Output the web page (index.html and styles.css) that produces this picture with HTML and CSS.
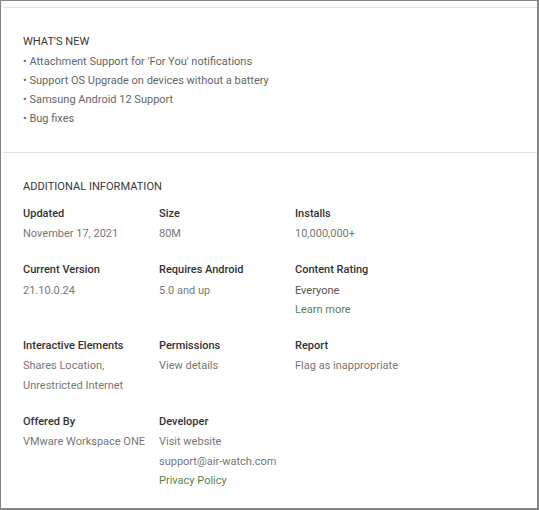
FILE: index.html
```html
<!DOCTYPE html>
<html lang="en">
  <head>
    <title>App details</title>
    <meta charset="UTF-8" />
    <meta name="viewport" content="width=device-width, initial-scale=1.0" />
    <link rel="stylesheet" href="styles.css">
  </head>
  <body>
    <div class="frame">
      <div class="section">
        <h2 class="section-title">What's New</h2>
        <div class="notes">
          <div>• Attachment Support for 'For You' notifications</div>
          <div>• Support OS Upgrade on devices without a battery</div>
          <div>• Samsung Android 12 Support</div>
          <div>• Bug fixes</div>
        </div>
      </div>

      <div class="section">
        <h2 class="section-title">Additional Information</h2>
        <div class="info-grid">
          <div class="info-item">
            <div class="info-label">Updated</div>
            <div class="info-value">November 17, 2021</div>
          </div>
          <div class="info-item">
            <div class="info-label">Size</div>
            <div class="info-value">80M</div>
          </div>
          <div class="info-item">
            <div class="info-label">Installs</div>
            <div class="info-value">10,000,000+</div>
          </div>

          <div class="info-item">
            <div class="info-label">Current Version</div>
            <div class="info-value">21.10.0.24</div>
          </div>
          <div class="info-item">
            <div class="info-label">Requires Android</div>
            <div class="info-value">5.0 and up</div>
          </div>
          <div class="info-item">
            <div class="info-label">Content Rating</div>
            <div class="info-value dark">Everyone</div>
            <a class="info-link green" href="#">Learn more</a>
          </div>

          <div class="info-item">
            <div class="info-label">Interactive Elements</div>
            <div class="info-value">Shares Location,</div>
            <div class="info-value">Unrestricted Internet</div>
          </div>
          <div class="info-item">
            <div class="info-label">Permissions</div>
            <a class="info-link" href="#">View details</a>
          </div>
          <div class="info-item">
            <div class="info-label">Report</div>
            <a class="info-link" href="#">Flag as inappropriate</a>
          </div>

          <div class="info-item">
            <div class="info-label">Offered By</div>
            <div class="info-value">VMware Workspace ONE</div>
          </div>
          <div class="info-item">
            <div class="info-label">Developer</div>
            <a class="info-link" href="#">Visit website</a>
            <a class="info-link" href="#">support@air-watch.com</a>
            <a class="info-link green" href="#">Privacy Policy</a>
          </div>
        </div>
      </div>
    </div>
  </body>
</html>
```

FILE: styles.css
```css
html,
body {
  margin: 0;
  background-color: #ffffff;
  font-family: Roboto, "Liberation Sans", Arial, sans-serif;
}

.frame {
  box-sizing: border-box;
  width: 539px;
  height: 510px;
  border-style: solid;
  border-color: #858585;
  border-width: 1px 2px 2px 1px;
  padding-top: 6px;
  overflow: hidden;
}

/* each block sits under a thin grey rule */
.section {
  margin-left: 2px;
  border-top: 1px solid #e3e3e3;
  padding: 24px 0 23px 20px;
}

.section-title {
  margin: 0;
  font-size: 11.1px;
  font-weight: 400;
  line-height: 19.5px;
  text-transform: uppercase;
  color: #383838;
}

.notes {
  font-size: 11px;
  line-height: 19.3px;
  color: #666666;
}

.info-grid {
  display: grid;
  grid-template-columns: repeat(3, 136px);
  row-gap: 16.4px;
  margin-top: 7.5px;
}

.info-item {
  display: flex;
  flex-direction: column;
  font-size: 11px;
  line-height: 19.5px;
}

.info-label {
  font-weight: 500;
  color: #333333;
  margin-bottom: 1px;
}

.info-value,
.info-link {
  color: #777777;
  text-decoration: none;
}

.info-value.dark {
  color: #555555;
}

.info-link.green {
  color: #5c7f50;
}
```
